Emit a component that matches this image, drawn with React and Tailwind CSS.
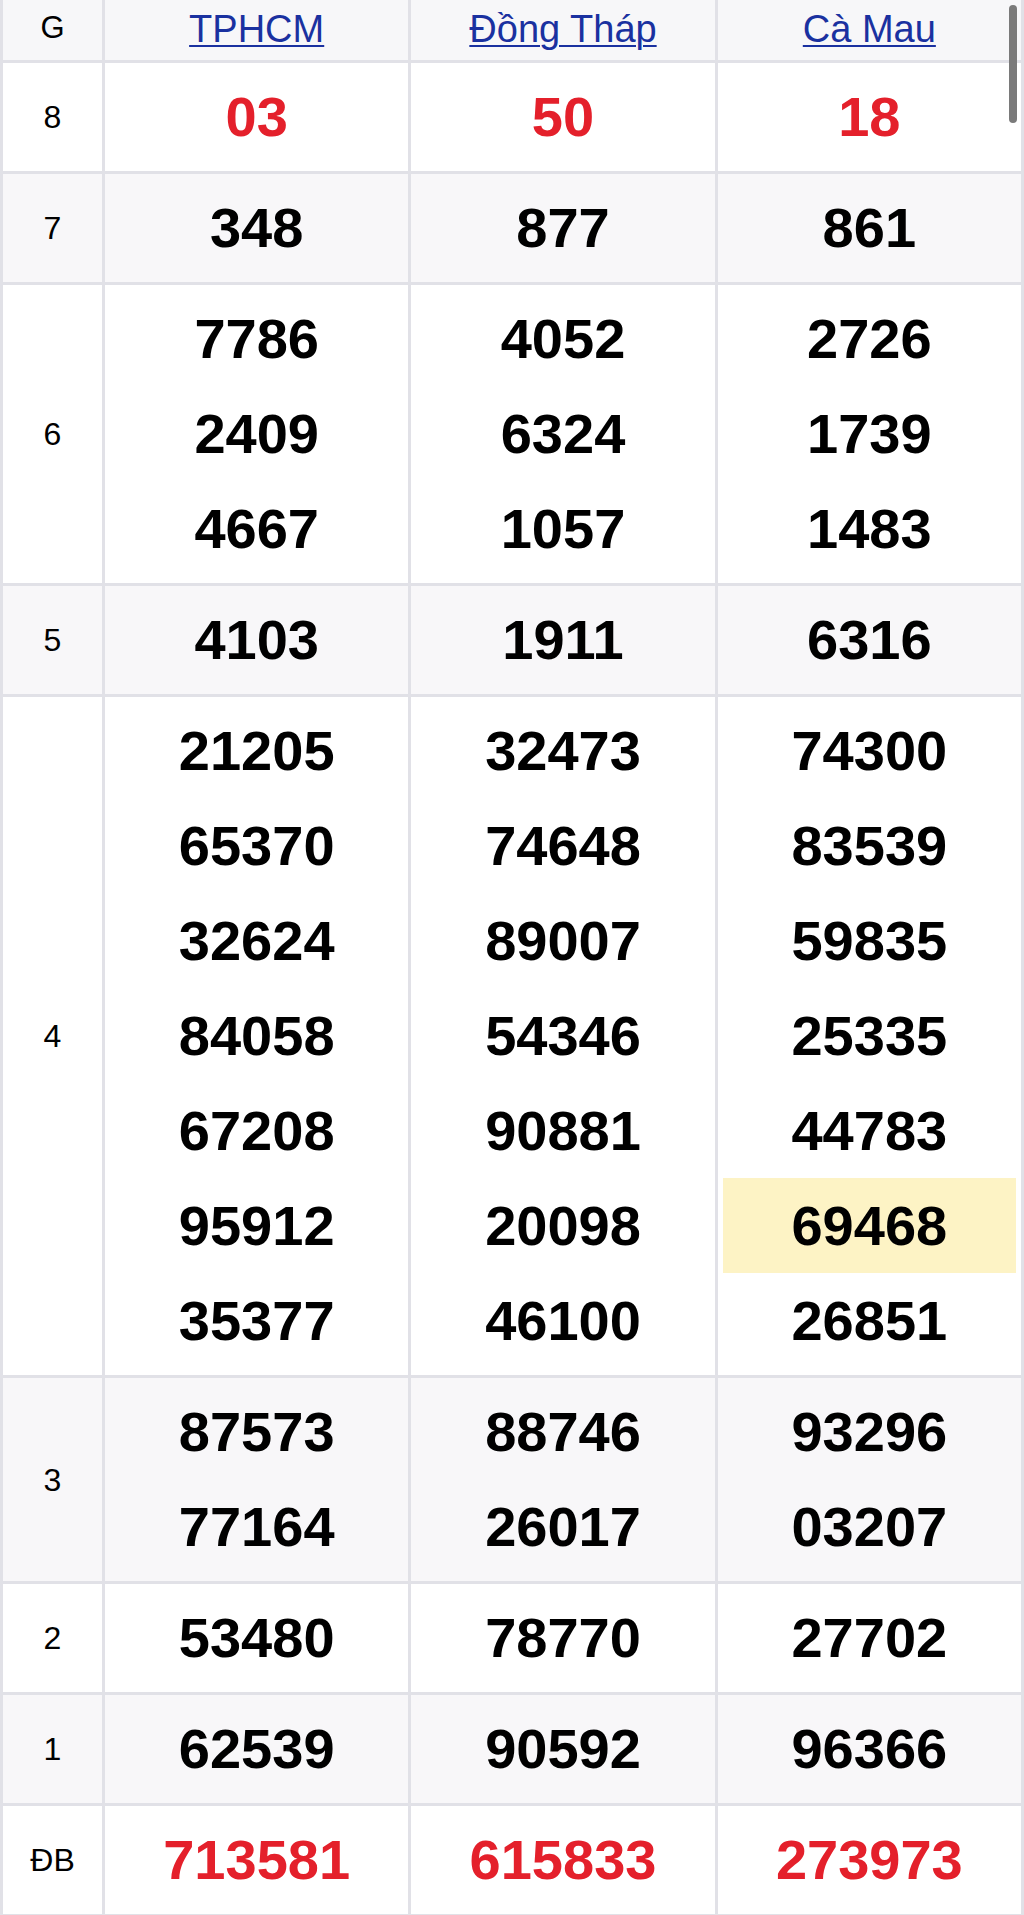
const FONT = { fontFamily: '"Liberation Sans", Arial, Helvetica, sans-serif' };

const provinces = ['TPHCM', 'Đồng Tháp', 'Cà Mau'];

const rows = [
  { label: '8', red: true, cols: [['03'], ['50'], ['18']] },
  { label: '7', cols: [['348'], ['877'], ['861']] },
  {
    label: '6',
    cols: [
      ['7786', '2409', '4667'],
      ['4052', '6324', '1057'],
      ['2726', '1739', '1483'],
    ],
  },
  { label: '5', cols: [['4103'], ['1911'], ['6316']] },
  {
    label: '4',
    cols: [
      ['21205', '65370', '32624', '84058', '67208', '95912', '35377'],
      ['32473', '74648', '89007', '54346', '90881', '20098', '46100'],
      ['74300', '83539', '59835', '25335', '44783', '69468', '26851'],
    ],
    highlight: [2, 5],
  },
  {
    label: '3',
    cols: [
      ['87573', '77164'],
      ['88746', '26017'],
      ['93296', '03207'],
    ],
  },
  { label: '2', cols: [['53480'], ['78770'], ['27702']] },
  { label: '1', cols: [['62539'], ['90592'], ['96366']] },
  { label: 'ĐB', red: true, cols: [['713581'], ['615833'], ['273973']] },
];

const border = 'border-[#e1e1e7] border-b-[3px] border-r-[3px]';

export default function App() {
  return (
    <div className="relative w-[1024px] bg-white overflow-hidden" style={FONT}>
      <div className="grid grid-cols-[105px_1fr_1fr_1fr]">
        {/* header */}
        <div className={`${border} border-l-[3px] bg-[#f7f7f9] h-[63px] flex items-center justify-center text-[31px] text-black pb-[3px]`}>
          G
        </div>
        {provinces.map((p) => (
          <div
            key={p}
            className={`${border} bg-[#f7f7f9] h-[63px] flex items-center justify-center pb-[2px]`}
          >
            <a
              href="#"
              className="text-[38px] leading-[48px] text-[#1a31a0] underline decoration-[2px] underline-offset-[3px]"
            >
              {p}
            </a>
          </div>
        ))}

        {rows.map((row, ri) => {
          const bg = ri % 2 === 1 ? 'bg-[#f8f7f9]' : 'bg-white';
          return [
            <div
              key={`l${ri}`}
              className={`${border} border-l-[3px] ${bg} flex items-center justify-center text-[32px] text-black`}
            >
              {row.label}
            </div>,
            ...row.cols.map((nums, ci) => (
              <div key={`c${ri}-${ci}`} className={`${border} ${bg} pt-[6px] pb-[7px] px-[5px]`}>
                {nums.map((n, ni) => {
                  const hl = row.highlight && row.highlight[0] === ci && row.highlight[1] === ni;
                  return (
                    <div
                      key={ni}
                      className={`text-center text-[56px] leading-[95px] font-bold ${
                        row.red ? 'text-[#e4202b]' : 'text-black'
                      } ${hl ? 'bg-[#fdf3c5]' : ''}`}
                    >
                      {n}
                    </div>
                  );
                })}
              </div>
            )),
          ];
        })}
      </div>

      {/* overlay scrollbar */}
      <div className="fixed right-[7px] top-[5px] w-[8px] h-[118px] rounded-full bg-[#7a7a7a]" />
    </div>
  );
}
